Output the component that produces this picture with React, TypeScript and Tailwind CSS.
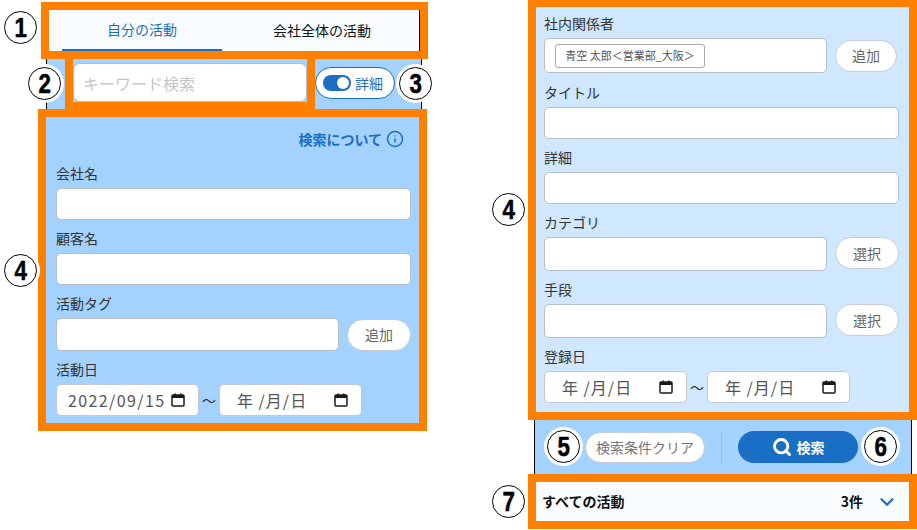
import { ChevronDown, Info, Search } from "lucide-react";

const FONT = "font-['Noto_Sans_CJK_JP','Noto_Sans',sans-serif]";

const CALLOUTS = [
  { n: 1, pos: "left-[4px] top-[11px]" },
  { n: 2, pos: "left-[28px] top-[67px]" },
  { n: 3, pos: "left-[399px] top-[67px]" },
  { n: 4, pos: "left-[4px] top-[254px]" },
  { n: 4, pos: "left-[492px] top-[193px]" },
  { n: 5, pos: "left-[547px] top-[430px]" },
  { n: 6, pos: "left-[864px] top-[430px]" },
  { n: 7, pos: "left-[492px] top-[485px]" },
];

function Label({ children }: { children: string }) {
  return <p className="mb-[5px] h-[20px] text-[14px] leading-[20px] text-[#333]">{children}</p>;
}

function TextInput({ className = "h-[32px]" }: { className?: string }) {
  return (
    <input
      className={`block w-full min-w-0 rounded-[5px] border border-[#b9bdc5] bg-white ${className}`}
    />
  );
}

function PillButton({ children, className }: { children: string; className: string }) {
  return (
    <button className={`shrink-0 rounded-full border border-[#c8ccd2] bg-white text-[14px] text-[#666] ${className}`}>
      {children}
    </button>
  );
}

function CalendarIcon() {
  return (
    <svg width="14" height="14" viewBox="0 0 14 14" className="shrink-0">
      <rect x="1" y="2" width="12" height="11" rx="1" fill="none" stroke="#1a1a1a" strokeWidth="1.5" />
      <rect x="1" y="2" width="12" height="3" fill="#1a1a1a" />
      <rect x="3.5" y="0.5" width="1.5" height="2" fill="#1a1a1a" />
      <rect x="9" y="0.5" width="1.5" height="2" fill="#1a1a1a" />
    </svg>
  );
}

function DateBox({ value }: { value?: string }) {
  return (
    <div className="flex h-[32px] w-[143px] items-center justify-between rounded-[5px] border border-[#c4c8ce] bg-white pl-[11px] pr-[13px] text-[16px] text-[#555]">
      {value ? (
        <span className="tracking-[1.4px]">{value}</span>
      ) : (
        <span className="pl-[6px] tracking-[1px]">年 /月/日</span>
      )}
      <CalendarIcon />
    </div>
  );
}

function DateRange({ from }: { from?: string }) {
  return (
    <div className="flex items-center">
      <DateBox value={from} />
      <span className="w-[20px] text-center text-[14px] text-[#333]">～</span>
      <DateBox />
    </div>
  );
}

export default function App() {
  return (
    <div className={`relative flex h-[530px] w-[917px] overflow-hidden bg-white ${FONT}`}>
      {/* left phone capture */}
      <div className="ml-[38px] flex w-[390px] shrink-0 flex-col pt-[2px]">
        <div className="ml-[3px] flex h-[57px] w-[387px] border-8 border-[#ff8000] bg-[#f8fcff] text-[14px]">
          <div className="ml-[13px] flex h-full w-[160px] items-center justify-center border-b-2 border-[#1a6fc4] text-[#1a6fc4]">
            自分の活動
          </div>
          <div className="ml-[20px] flex h-full w-[160px] items-center justify-center text-[#111]">
            会社全体の活動
          </div>
          <span className="ml-auto h-full w-px bg-black" />
        </div>

        <div className="ml-[8px] flex h-[50px] w-[376px] border-x border-black bg-[#a3d2ff]">
          <div className="ml-[18px] h-[51px] w-[250px] border-x-8 border-b-8 border-[#ff8000] pt-[4px]">
            <input
              placeholder="キーワード検索"
              className="block h-[39px] w-full rounded-[7px] border border-[#b9bdc5] bg-white pl-[9px] text-[16px] placeholder:text-[#c4c6cc]"
            />
          </div>
          <div className="mt-[8px] flex h-[32px] w-[80px] items-center gap-[4px] rounded-full border border-[#1a6fc4] bg-white pl-[7px] text-[14px] text-[#1a6fc4]">
            <span className="flex h-[16px] w-[28px] items-center justify-end rounded-full bg-[#1a6fc4] pr-[2px]">
              <span className="h-[12px] w-[12px] rounded-full bg-white" />
            </span>
            詳細
          </div>
        </div>

        <div className="w-[389px] border-8 border-[#ff8000] bg-[#a3d2ff] pl-[10px] pr-[8px] pt-[12px]">
          <div className="mb-[14px] flex h-[20px] items-center justify-end gap-[4px] pr-[7px] text-[14px] font-bold text-[#1a6fc4]">
            検索について
            <Info size={18} strokeWidth={2} />
          </div>
          <Label>会社名</Label>
          <TextInput />
          <div className="mt-[8px]">
            <Label>顧客名</Label>
            <TextInput />
          </div>
          <div className="mt-[8px]">
            <Label>活動タグ</Label>
            <div className="flex items-center gap-[8px]">
              <TextInput className="h-[33px]" />
              <PillButton className="h-[32px] w-[64px]">追加</PillButton>
            </div>
          </div>
          <div className="mb-[7px] mt-[8px]">
            <Label>活動日</Label>
            <DateRange from="2022/09/15" />
          </div>
        </div>
      </div>

      {/* right phone capture */}
      <div className="ml-[100px] flex w-[389px] shrink-0 flex-col">
        <div className="border-8 border-t-[7px] border-[#ff8000] bg-[#d0e8ff] pl-[8px] pr-[10px] pt-[6px]">
          <Label>社内関係者</Label>
          <div className="flex items-center gap-[8px]">
            <div className="flex h-[35px] w-[283px] shrink-0 items-center rounded-[5px] border border-[#b9bdc5] bg-white pl-[10px]">
              <span className="flex h-[24px] w-[150px] items-center justify-center rounded-[3px] border border-[#aaa] text-[11px] text-[#555]">
                青空 太郎＜営業部_大阪＞
              </span>
            </div>
            <PillButton className="h-[32px] w-[62px]">追加</PillButton>
          </div>
          <div className="mt-[9px]">
            <Label>タイトル</Label>
            <TextInput />
          </div>
          <div className="mt-[8px]">
            <Label>詳細</Label>
            <TextInput />
          </div>
          <div className="mt-[8px]">
            <Label>カテゴリ</Label>
            <div className="flex items-start gap-[8px]">
              <TextInput className="h-[34px]" />
              <PillButton className="h-[32px] w-[64px]">選択</PillButton>
            </div>
          </div>
          <div className="mt-[8px]">
            <Label>手段</Label>
            <div className="flex items-start gap-[8px]">
              <TextInput className="h-[34px]" />
              <PillButton className="h-[32px] w-[64px]">選択</PillButton>
            </div>
          </div>
          <div className="mb-[9px] mt-[8px]">
            <Label>登録日</Label>
            <DateRange />
          </div>
        </div>

        <div className="ml-[6px] flex h-[54px] w-[378px] items-center border-x border-black bg-[#a3d2ff]">
          <button className="ml-[50px] h-[31px] w-[120px] rounded-full border border-[#c8ccd2] bg-white text-[14px] text-[#777]">
            検索条件クリア
          </button>
          <span className="ml-[16px] h-[32px] w-px bg-[#8fbde8]" />
          <button className="ml-[16px] flex h-[32px] w-[120px] items-center justify-center gap-[5px] rounded-full bg-[#1a6fc4] text-[14px] font-bold text-white">
            <Search size={20} strokeWidth={3.5} />
            検索
          </button>
        </div>

        <div className="flex h-[55px] items-center justify-between border-8 border-[#ff8000] bg-[#f8fcff] pl-[6px] pr-[11px] text-[14px] font-bold text-[#111]">
          すべての活動
          <span className="flex items-center gap-[13px]">
            3件
            <ChevronDown size={22} strokeWidth={2.5} className="text-[#1a6fc4]" />
          </span>
        </div>
      </div>

      {CALLOUTS.map((c) => (
        <span
          key={c.pos}
          className={`absolute flex h-[33px] w-[33px] items-center justify-center rounded-full border-[1.5px] border-black bg-white font-['Liberation_Sans',sans-serif] text-[28px] font-bold leading-none text-black shadow-[0_0_0_3px_#fff] ${c.pos}`}
        >
          <span className="scale-x-[0.8] [-webkit-text-stroke:0.5px_#000]">{c.n}</span>
        </span>
      ))}
    </div>
  );
}
